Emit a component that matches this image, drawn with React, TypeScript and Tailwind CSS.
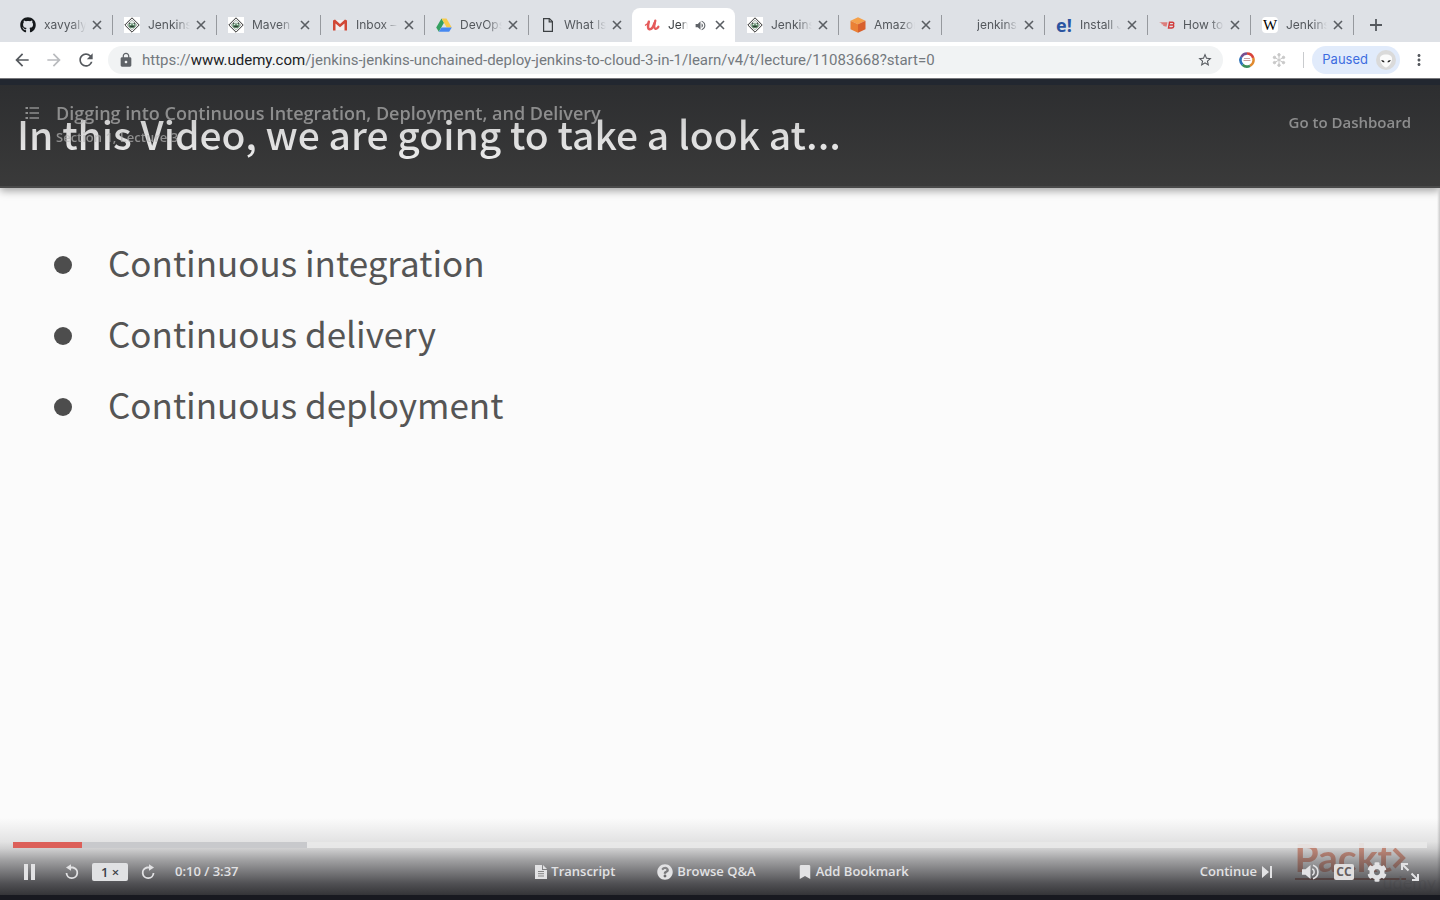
import React from "react";
import { FaGithub, FaQuestionCircle, FaBookmark, FaCog } from "react-icons/fa";
import { MdArrowBack, MdArrowForward, MdRefresh, MdLock, MdStarBorder, MdVolumeUp, MdMoreVert } from "react-icons/md";

const JenkinsIcon = () => (
  <svg viewBox="0 0 16 16" className="size-4">
    <rect width="16" height="16" fill="#fff" />
    <path d="M8 .8 15.2 8 8 15.2.8 8Z" fill="#fff" stroke="#333" strokeWidth="1" />
    <path d="M8 2.8 13.2 8 8 13.2 2.8 8Z" fill="#e3ebe5" stroke="#777" strokeWidth=".5" />
    <path d="M4.500 6.400h7v2.400c0 1.400-1.400 2.300-3.500 2.300S4.500 10.200 4.500 8.800Z" fill="#5d8a6a" />
    <path d="M5 5.800 6.400 6.800M11 5.800 9.600 6.800M6.200 9.300h3.600" stroke="#222" strokeWidth="1" />
    <circle cx="6.500" cy="7.500" r=".8" fill="#dfeee3" />
    <circle cx="9.500" cy="7.500" r=".8" fill="#dfeee3" />
  </svg>
);

const GmailIcon = () => (
  <svg viewBox="0 0 16 16" className="size-4">
    <path d="M2 3h12v10H2Z" fill="#f1eeee" />
    <path d="M1 13.500V3.500L3 2.500 8 7l5-4.500 2 1v10h-2.500V6.500L8 10.200 3.500 6.500v7Z" fill="#d14836" />
  </svg>
);

const DriveIcon = () => (
  <svg viewBox="0 0 16 16" className="size-4">
    <path d="M5.500 1.500 8 5.800 2.800 14.800.2 10.500Z" fill="#34a060" />
    <path d="M5.500 1.500h5l5.300 9h-5.100Z" fill="#f7cb4d" />
    <path d="M5.400 10.500h10.400l-2.600 4.300H2.800Z" fill="#4688f1" />
  </svg>
);

const PageIcon = () => (
  <svg viewBox="0 0 16 16" className="size-4" fill="none" stroke="#3c4043" strokeWidth="1.200">
    <path d="M3.600 1.600h5.800l3 3v9.800H3.600Z" />
    <path d="M9.200 1.800v3.100h3.100" />
  </svg>
);

const UdemyIcon = () => (
  <svg viewBox="0 0 16 16" className="size-4" fill="none" stroke="#e55b5b" strokeLinecap="round">
    <path d="M1.500 8.200C3 7.500 4.600 5.800 5 4.300" strokeWidth="1.300" />
    <path d="M4.800 4.800C4 8 3.400 11.800 5.400 12.200c2.300.3 4-2.500 5-5.800" strokeWidth="2.500" />
    <path d="M11.300 3.600C10.400 7 9.600 11 11.300 11.800c1.300.4 2.500-.8 3.100-2" strokeWidth="2.300" />
  </svg>
);

const CubeIcon = () => (
  <svg viewBox="0 0 16 16" className="size-4">
    <path d="m8 .3 7.500 3.500L8 7.200.5 3.800Z" fill="#f5a04a" />
    <path d="M.5 3.800 8 7.200v8.500L.5 12.200Z" fill="#ea8035" />
    <path d="M15.500 3.800 8 7.200v8.500l7.500-3.500Z" fill="#d8602c" />
  </svg>
);

const BlankIcon = () => <span className="size-4" />;

const InstallIcon = () => (
  <span className="flex size-4 items-center justify-center font-['Open_Sans',sans-serif] text-[18px] leading-4 font-bold text-[#2a54a0]">e!</span>
);

const WingIcon = () => (
  <svg viewBox="0 0 16 16" className="size-4">
    <path d="M0 5.300h8.500L7.500 9.800 5.500 9.300 3.800 8.600 4.500 7.800 2 7l.8-.8Z" fill="#dc7d7b" />
    <path d="M10.500 5.300h3c2 0 1.500 2.700 0 2.700h-3 3c2 0 1.500 3-.8 3H9.500Z" fill="none" stroke="#d23c3c" strokeWidth="1.400" />
  </svg>
);

const WikiIcon = () => (
  <span className="flex size-4 items-center justify-center rounded-sm bg-white font-['Liberation_Serif',serif] text-[15px] leading-4 text-black">W</span>
);

const tabs = [
  { title: "xavyaly", icon: <FaGithub className="size-4 text-[#15181b]" />, width: "w-[104px]" },
  { title: "Jenkins", icon: <JenkinsIcon />, width: "w-[104px]" },
  { title: "Maven", icon: <JenkinsIcon />, width: "w-[104px]" },
  { title: "Inbox – ", icon: <GmailIcon />, width: "w-[104px]" },
  { title: "DevOps", icon: <DriveIcon />, width: "w-[104px]" },
  { title: "What Is", icon: <PageIcon />, width: "w-[104px]" },
  { title: "Jenkins", icon: <UdemyIcon />, width: "w-[103px]", active: true },
  { title: "Jenkins", icon: <JenkinsIcon />, width: "w-[103px]" },
  { title: "Amazon", icon: <CubeIcon />, width: "w-[103px]" },
  { title: "jenkins", icon: <BlankIcon />, width: "w-[103px]" },
  { title: "Install J", icon: <InstallIcon />, width: "w-[103px]" },
  { title: "How to", icon: <WingIcon />, width: "w-[103px]" },
  { title: "Jenkins", icon: <WikiIcon />, width: "w-[103px]" },
];

function TabStrip() {
  return (
    <div className="flex h-[42px] items-end bg-[#dee1e6] pl-2">
      {tabs.map((tab, i) => {
        const divided = !tab.active && !tabs[i + 1]?.active;
        return (
          <div
            key={i}
            className={`relative flex h-[34px] min-w-0 items-center pr-[10px] pl-3 ${tab.width} ${tab.active ? "rounded-t-lg bg-white text-[#3c4043]" : "text-[#54585d]"}`}
          >
            <span className="mr-2 flex size-4 shrink-0">{tab.icon}</span>
            <a
              href="#tab"
              className="mr-[6px] min-w-0 flex-1 overflow-hidden mask-r-from-65% text-[12px] leading-4 whitespace-nowrap"
            >
              {tab.title}
            </a>
            {tab.active && <MdVolumeUp className="mr-2 size-[13px] shrink-0 text-[#5f6368]" />}
            <button aria-label="Close tab" className="shrink-0">
              <svg viewBox="0 0 10 10" className="size-[10px]" stroke="#5a5e63" strokeWidth="1.600">
                <path d="m1 1 8 8M9 1 1 9" />
              </svg>
            </button>
            {divided && <span className="absolute top-[7px] -right-px h-5 w-px bg-[#96999e]" />}
          </div>
        );
      })}
      <button aria-label="New tab" className="mb-[11px] ml-[17px]">
        <svg viewBox="0 0 12 12" className="size-3" stroke="#55595e" strokeWidth="1.800">
          <path d="M6 0v12M0 6h12" />
        </svg>
      </button>
    </div>
  );
}

function Toolbar() {
  return (
    <div className="flex h-9 items-center bg-white pr-3 pl-3">
      <button aria-label="Back" className="mr-3"><MdArrowBack className="size-5 text-[#55595e]" /></button>
      <button aria-label="Forward" className="mr-3"><MdArrowForward className="size-5 text-[#b9bbbe]" /></button>
      <button aria-label="Reload" className="mr-3"><MdRefresh className="size-5 text-[#55595e]" /></button>
      <div className="flex h-7 min-w-0 flex-1 items-center rounded-full bg-[#f1f3f4] pr-[10px] pl-[10px]">
        <MdLock className="mr-2 size-4 shrink-0 text-[#5f6368]" />
        <p className="min-w-0 flex-1 truncate font-['Roboto',sans-serif] text-[15px] leading-5 text-[#74797e]">
          https://<span className="text-[#202124]">www.udemy.com</span>/jenkins-jenkins-unchained-deploy-jenkins-to-cloud-3-in-1/learn/v4/t/lecture/11083668?start=0
        </p>
        <button aria-label="Bookmark this page"><MdStarBorder className="size-4 text-[#55595e]" /></button>
      </div>
      <svg viewBox="0 0 16 16" className="ml-4 size-4" fill="none" strokeWidth="2.600">
        <circle cx="8" cy="8" r="6.500" fill="#fff" />
        <path d="M8 1.500a6.500 6.500 0 0 1 6.200 4.500" stroke="#d9443a" />
        <path d="M14.200 6A6.500 6.500 0 0 1 11 13.800" stroke="#e08a2e" />
        <path d="M11 13.800A6.500 6.500 0 0 1 3.500 12.700" stroke="#3c8f5a" />
        <path d="M3.500 12.700A6.500 6.500 0 0 1 2.300 5" stroke="#2f73b8" />
        <path d="M2.300 5A6.500 6.500 0 0 1 8 1.500" stroke="#775090" />
        <path d="M5 6.500h6M4.500 8.500h7" stroke="#c9a0a0" strokeWidth="1" />
      </svg>
      <svg viewBox="0 0 16 16" className="ml-4 size-4" fill="#c8c8c8" stroke="#c8c8c8">
        <path d="M8 3v10M3.700 5.500l8.600 5M12.300 5.500l-8.600 5" strokeWidth="1" />
        <circle cx="8" cy="2.800" r="1.200" /><circle cx="8" cy="13.200" r="1.200" />
        <circle cx="3.500" cy="5.400" r="1.200" /><circle cx="12.500" cy="5.400" r="1.200" />
        <circle cx="3.500" cy="10.600" r="1.200" /><circle cx="12.500" cy="10.600" r="1.200" />
      </svg>
      <span className="ml-4 h-4 w-px bg-[#c9cbce]" />
      <button className="ml-2 flex h-7 items-center gap-2 rounded-full bg-[#e1ebfb] pr-1 pl-[10px] text-[13px] text-[#3d6de0]">
        Paused
        <svg viewBox="0 0 20 20" className="size-5">
          <circle cx="10" cy="10" r="10" fill="#dadada" />
          <path d="M10 4.500c4 0 6.500 1.800 6 5-.5 3.500-3.500 7.500-6 8-2.500-.5-5.500-4.500-6-8C3.500 6.300 6 4.500 10 4.500Z" fill="#fbfbfb" />
          <path d="M5.300 10c1.600 0 3 .8 3.300 2.300C7 12.500 5.600 11.600 5.300 10ZM14.700 10c-1.600 0-3 .8-3.300 2.300 1.600.2 3-.7 3.300-2.300Z" fill="#222" />
        </svg>
      </button>
      <button aria-label="Menu" className="ml-[10px]"><MdMoreVert className="size-[18px] text-[#55595e]" /></button>
    </div>
  );
}

function LectureHeader() {
  return (
    <div className="absolute inset-x-0 top-0 flex items-start justify-between pt-[22px] pr-[29px] pl-6 text-[#b4b4b4] opacity-70">
      <div className="flex gap-4">
        <button aria-label="Course contents" className="mt-1 size-4">
          <svg viewBox="0 0 16 16" className="size-4" stroke="currentColor" strokeWidth="1.300" fill="none">
            <path d="M5.500 3H15M5.500 8H15M5.500 13H15" />
            <path d="M1.500 3h2.500M1.500 8h2.500M1.500 13h2.500" strokeWidth="2.200" />
          </svg>
        </button>
        <div>
          <h1 className="text-[18px] leading-6 font-semibold">Digging into Continuous Integration, Deployment, and Delivery</h1>
          <p className="text-[13px] leading-6 font-semibold">Section 1, Lecture 3</p>
        </div>
      </div>
      <a href="#dashboard" className="mt-[9px] text-[15px] leading-6 font-semibold">Go to Dashboard</a>
    </div>
  );
}

function Slide() {
  return (
    <div>
      <div className="h-[109px] border-t-[6px] border-b-2 border-t-[#222730] border-b-[#4a4a4a] bg-linear-to-b from-[#2d2e30] to-[#3a3a3a] pt-[16px] pl-[17px] shadow-[0_3px_8px_rgba(0,0,0,0.35)]">
        <h2 className="bg-linear-to-b from-[#c4c4c4] to-[#f0f0f0] bg-clip-text font-['Noto_Sans_CJK_SC',sans-serif] text-[39px] leading-[64px] font-medium whitespace-nowrap text-transparent">
          In this Video, we are going to take a look at...
        </h2>
      </div>
      <ul className="flex flex-col gap-[23px] pt-[50px] pl-[54px] font-['Noto_Sans_CJK_SC',sans-serif] text-[35px] leading-[48px] text-[#555]">
        {["Continuous integration", "Continuous delivery", "Continuous deployment"].map((item) => (
          <li key={item} className="flex items-start gap-9">
            <span className="mt-[18px] size-[18px] rounded-full bg-[#4d4d4d]" />
            {item}
          </li>
        ))}
      </ul>
    </div>
  );
}

function Controls() {
  return (
    <div className="relative flex h-[47px] items-center justify-between pt-px pr-5 pl-6 text-[13px] font-semibold text-[#e2e2e4]">
      <div className="flex flex-1 items-center">
        <button aria-label="Pause" className="flex gap-[3px]">
          <span className="h-4 w-1 bg-[#e2e2e4]" />
          <span className="h-4 w-1 bg-[#e2e2e4]" />
        </button>
        <button aria-label="Rewind" className="ml-[29px]">
          <svg viewBox="0 0 16 16" className="size-4" fill="none" stroke="currentColor" strokeWidth="1.800">
            <path d="M4.500 3.500H9A5.400 5.400 0 1 1 2.500 9" />
            <path d="M2 3.500 7 .3v6.400Z" fill="currentColor" stroke="none" />
          </svg>
        </button>
        <button className="ml-3 h-[18px] w-9 rounded-xs bg-[#e0e1e3] text-[13px] leading-[18px] text-[#3d4048]">1 ×</button>
        <button aria-label="Forward" className="ml-3">
          <svg viewBox="0 0 16 16" className="size-4 -scale-x-100" fill="none" stroke="currentColor" strokeWidth="1.800">
            <path d="M4.500 3.500H9A5.400 5.400 0 1 1 2.500 9" />
            <path d="M2 3.500 7 .3v6.400Z" fill="currentColor" stroke="none" />
          </svg>
        </button>
        <span className="ml-[19px]">0:10 / 3:37</span>
      </div>
      <div className="flex items-center gap-[42px]">
        <button className="flex items-center gap-1">
          <svg viewBox="0 0 12 14" className="h-[14px] w-3">
            <path d="M0 0h7v5h5v9H0ZM8 0l4 4H8Z" fill="currentColor" />
            <path d="M3 6.500h6M3 8.700h6M3 11h6" stroke="#858585" />
          </svg>
          Transcript
        </button>
        <button className="flex items-center gap-1"><FaQuestionCircle className="size-4" />Browse Q&amp;A</button>
        <button className="flex items-center gap-1"><FaBookmark className="size-[14px]" />Add Bookmark</button>
      </div>
      <div className="flex flex-1 items-center justify-end">
        <button className="flex items-center gap-1">
          Continue
          <svg viewBox="0 0 12 12" className="size-3" fill="currentColor"><path d="M1 0l7 6-7 6ZM9 0h2v12H9Z" /></svg>
        </button>
        <button aria-label="Volume" className="ml-[29px]">
          <svg viewBox="0 0 18 16" className="h-4 w-[18px]" fill="none" stroke="currentColor" strokeWidth="1.600">
            <path d="M0 5.300h3.500L8.500 1v14L3.500 10.700H0Z" fill="currentColor" stroke="none" />
            <path d="M10.300 4.700c2.500 1.400 2.500 5.200 0 6.600M11 1.300c6.600 2.200 6.600 11.200 0 13.400" />
          </svg>
        </button>
        <button aria-label="Captions" className="ml-[14px] h-4 w-5 rounded-xs bg-[#e0dede] text-[12px] leading-4 font-bold text-[#665e5e]">CC</button>
        <button aria-label="Settings" className="ml-[13px]"><FaCog className="size-5" /></button>
        <button aria-label="Full screen" className="ml-[13px]">
          <svg viewBox="0 0 20 20" className="size-5" fill="none" stroke="currentColor" strokeWidth="2">
            <path d="M2 8V2h6M2 2l6.500 6.500M18 12v6h-6M18 18l-6.500-6.500" />
          </svg>
        </button>
      </div>
    </div>
  );
}

function Player() {
  return (
    <main className="relative flex flex-1 flex-col justify-between overflow-hidden border-t border-[#77777b] bg-[#fbfbfb] font-['Open_Sans',sans-serif]">
      <Slide />
      <LectureHeader />
      <div className="absolute right-0 bottom-0 h-[calc(100%-109px)] w-[3px] bg-linear-to-r from-transparent to-[#cccccc]" />
      <div className="relative">
        <div className="absolute right-[34px] bottom-[20px] flex border-b-2 border-[#b4604a] pb-[3px] font-['Lato',sans-serif] text-[39px] leading-9 font-bold text-[#e2896f] opacity-80">
          Packt
          <svg viewBox="0 0 14 34" className="h-[34px] w-[14px]" fill="none" stroke="currentColor" strokeWidth="4"><path d="m2 10 9 9-9 9" /></svg>
        </div>
        <span className="absolute right-1 bottom-[6px] font-['Lato',sans-serif] text-[18px] leading-6 text-[#ddd]">udemy</span>
        <div className="relative bg-[linear-gradient(to_bottom,rgba(48,48,52,0)_0%,rgba(48,48,52,0.12)_31%,rgba(48,48,52,0.22)_40%,rgba(48,48,52,0.45)_55%,rgba(48,48,52,0.62)_68%,rgba(48,48,52,0.84)_85%,rgba(48,48,52,0.98)_100%)] pt-6">
          <div className="mx-[13px] flex h-[6px] bg-[#e9e9e9]/90">
            <div className="w-[69px] bg-[#dc5f59]" />
            <div className="w-[225px] bg-[#c8c9cc]" />
          </div>
          <Controls />
        </div>
        <div className="relative h-[5px] bg-[#181920]" />
      </div>
    </main>
  );
}

export default function App() {
  return (
    <div className="flex min-h-screen flex-col bg-white font-['Inter',sans-serif]">
      <TabStrip />
      <Toolbar />
      <Player />
    </div>
  );
}
